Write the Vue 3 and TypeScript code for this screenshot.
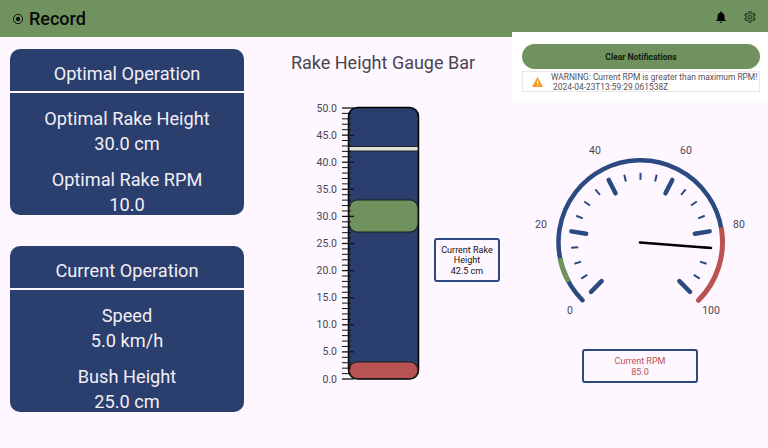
<script setup lang="ts">
const barTop = 108
const barBottom = 379
const barY = (v: number) => barBottom - ((barBottom - barTop) * v) / 50

const barTicks = Array.from({ length: 51 }, (_, v) => ({
  y: barY(v),
  major: v % 5 === 0,
}))
const barLabels = Array.from({ length: 11 }, (_, i) => ({
  y: barY(i * 5),
  text: (i * 5).toFixed(1),
}))

// gauge: 0 sits at 225deg, 100 at -45deg
const cx = 110.5
const cy = 107.3
const R = 82
const polar = (v: number, r: number) => {
  const a = ((225 - 2.7 * v) * Math.PI) / 180
  return { x: cx + r * Math.cos(a), y: cy - r * Math.sin(a) }
}
const arc = (from: number, to: number) => {
  const a = polar(from, R)
  const b = polar(to, R)
  const large = (to - from) * 2.7 > 180 ? 1 : 0
  return `M${a.x} ${a.y}A${R} ${R} 0 ${large} 1 ${b.x} ${b.y}`
}

const gaugeTicks = Array.from({ length: 21 }, (_, i) => {
  const v = i * 5
  const major = v % 20 === 0
  const p1 = polar(v, major ? 55 : 62.5)
  const p2 = polar(v, major ? 70 : 69.5)
  return { x1: p1.x, y1: p1.y, x2: p2.x, y2: p2.y, major }
})

const gaugeLabels = [
  { x: 40, y: 179, t: '0' },
  { x: 11, y: 93, t: '20' },
  { x: 65, y: 19, t: '40' },
  { x: 156, y: 19, t: '60' },
  { x: 209, y: 93, t: '80' },
  { x: 181, y: 179, t: '100' },
]
</script>

<template>
  <div class="page">
    <header class="topbar">
      <div class="record">
        <svg width="12" height="12" viewBox="0 0 12 12">
          <circle cx="6" cy="6" r="4.6" fill="none" stroke="#111" stroke-width="1" />
          <circle cx="6" cy="6" r="2.2" fill="#111" />
        </svg>
        <span>Record</span>
      </div>
      <div class="actions">
        <svg width="14" height="14" viewBox="0 0 24 24">
          <path fill="#000" d="M12 22c1.1 0 2-.9 2-2h-4c0 1.1.9 2 2 2zm6-6v-5c0-3.07-1.63-5.64-4.5-6.32V4c0-.83-.67-1.5-1.5-1.5s-1.5.67-1.5 1.5v.68C7.64 5.36 6 7.92 6 11v5l-2 2v1h16v-1l-2-2z" />
        </svg>
        <svg width="14" height="14" viewBox="0 0 24 24">
          <path fill="#2a3a24" d="M19.43 12.98c.04-.32.07-.64.07-.98s-.03-.66-.07-.98l2.11-1.65c.19-.15.24-.42.12-.64l-2-3.46c-.12-.22-.39-.3-.61-.22l-2.49 1c-.52-.4-1.08-.73-1.69-.98l-.38-2.65C14.46 2.18 14.25 2 14 2h-4c-.25 0-.46.18-.49.42l-.38 2.65c-.61.25-1.17.59-1.69.98l-2.49-1c-.23-.09-.49 0-.61.22l-2 3.46c-.13.22-.07.49.12.64l2.11 1.65c-.04.32-.07.65-.07.98s.03.66.07.98l-2.11 1.65c-.19.15-.24.42-.12.64l2 3.46c.12.22.39.3.61.22l2.49-1c.52.4 1.08.73 1.69.98l.38 2.65c.03.24.24.42.49.42h4c.25 0 .46-.18.49-.42l.38-2.65c.61-.25 1.17-.59 1.69-.98l2.49 1c.23.09.49 0 .61-.22l2-3.46c.12-.22.07-.49-.12-.64l-2.11-1.65zM17.5 12c0 .3-.03.6-.07.98l-.14 1.13.89.7 1.08.84-.7 1.21-1.27-.51-1.04-.42-.9.68c-.43.32-.84.56-1.25.73l-1.06.43-.16 1.13-.2 1.35h-1.4l-.19-1.35-.16-1.13-1.06-.43c-.43-.18-.83-.41-1.23-.71l-.91-.7-1.06.43-1.27.51-.7-1.21 1.08-.84.89-.7-.14-1.13c-.03-.31-.05-.65-.05-.95s.02-.64.07-.98l.14-1.13-.89-.7-1.08-.84.7-1.21 1.27.51 1.04.42.9-.68c.43-.32.84-.56 1.25-.73l1.06-.43.16-1.13.2-1.35h1.39l.19 1.35.16 1.13 1.06.43c.43.18.83.41 1.23.71l.91.7 1.06-.43 1.27-.51.7 1.21-1.07.85-.89.7.14 1.13c.03.31.05.63.05.95zM12 8c-2.21 0-4 1.79-4 4s1.79 4 4 4 4-1.79 4-4-1.79-4-4-4zm0 6c-1.1 0-2-.9-2-2s.9-2 2-2 2 .9 2 2-.9 2-2 2z" />
        </svg>
      </div>
    </header>

    <main class="content">
      <section class="cards">
        <div class="card">
          <div class="card-title">Optimal Operation</div>
          <div class="card-body">
            <div class="stat">Optimal Rake Height<br />30.0 cm</div>
            <div class="stat">Optimal Rake RPM<br />10.0</div>
          </div>
        </div>
        <div class="card">
          <div class="card-title">Current Operation</div>
          <div class="card-body">
            <div class="stat">Speed<br />5.0 km/h</div>
            <div class="stat">Bush Height<br />25.0 cm</div>
          </div>
        </div>
      </section>

      <section class="rake">
        <h2 class="rake-title">Rake Height Gauge Bar</h2>
        <div class="rake-row">
          <svg class="bar" width="110" height="290" viewBox="310 100 110 290">
            <rect x="348.5" y="107.5" width="70" height="271.5" rx="9" fill="#2a3f6d" stroke="#000" stroke-width="1.5" />
            <rect x="349" y="146.5" width="69" height="4.5" fill="#e0e0dc" stroke="#222" stroke-width="1" />
            <rect x="349" y="200" width="69" height="32" rx="8" fill="#6f925f" stroke="#1a1a1a" stroke-width="1.2" />
            <rect x="349" y="362" width="69" height="16.5" rx="8" fill="#b95353" stroke="#1a1a1a" stroke-width="1.2" />
            <line
              v-for="t in barTicks"
              :key="t.y"
              x1="342"
              :x2="t.major ? 354 : 351"
              :y1="t.y"
              :y2="t.y"
              stroke="#111"
              :stroke-width="t.major ? 1.3 : 1"
            />
            <text v-for="l in barLabels" :key="l.text" class="bar-label" x="337" :y="l.y + 3.5">{{ l.text }}</text>
          </svg>
          <div class="callout">Current Rake<br />Height<br />42.5 cm</div>
        </div>
      </section>

      <section class="rpm">
        <svg class="gauge" width="220" height="190" viewBox="0 0 220 190">
          <path :d="arc(0, 80)" fill="none" stroke="#2a4a80" stroke-width="4.5" stroke-linecap="round" />
          <path :d="arc(6, 12.5)" fill="none" stroke="#6f925f" stroke-width="5" />
          <path :d="arc(80, 100)" fill="none" stroke="#bb5252" stroke-width="5" stroke-linecap="round" />
          <line
            v-for="(t, i) in gaugeTicks"
            :key="i"
            :x1="t.x1"
            :y1="t.y1"
            :x2="t.x2"
            :y2="t.y2"
            stroke="#2a4a80"
            :stroke-width="t.major ? 4.5 : 2"
            :stroke-linecap="t.major ? 'round' : 'butt'"
          />
          <line x1="110" y1="107.5" x2="181" y2="113" stroke="#000" stroke-width="2.6" stroke-linecap="round" />
          <text v-for="l in gaugeLabels" :key="l.t" class="gauge-label" :x="l.x" :y="l.y">{{ l.t }}</text>
        </svg>
        <div class="rpm-box">Current RPM<br />85.0</div>
      </section>
    </main>

    <aside class="notifications">
      <button class="clear">Clear Notifications</button>
      <div class="notice">
        <svg class="warn" width="11" height="10" viewBox="0 0 24 22">
          <path fill="#f59a23" d="M0 22 12 0l12 22z" />
          <rect x="11" y="8" width="2.4" height="7" fill="#fff" />
          <rect x="11" y="16.5" width="2.4" height="2.4" fill="#fff" />
        </svg>
        <div class="notice-text">WARNING: Current RPM is greater than maximum RPM!<br />&nbsp;2024-04-23T13:59:29.061538Z</div>
      </div>
    </aside>
  </div>
</template>

<style scoped>
.page {
  position: relative;
  width: 768px;
  height: 448px;
  overflow: hidden;
  background: #fef7ff;
  font-family: Roboto, "Liberation Sans", sans-serif;
}

.topbar {
  height: 37px;
  background: #6f925f;
  display: flex;
  align-items: center;
  justify-content: space-between;
  padding: 0 11px 0 12px;
  box-sizing: border-box;
}

.record {
  display: flex;
  align-items: center;
  gap: 5px;
  font-size: 18px;
  font-weight: 500;
  color: #0a0a0a;
}

.actions {
  display: flex;
  gap: 15px;
  align-items: center;
  margin-top: -3px;
}

.actions svg {
  display: block;
}

.content {
  display: flex;
  height: 411px;
}

.cards {
  width: 234px;
  margin: 0 10px;
  padding-top: 12px;
  display: flex;
  flex-direction: column;
  gap: 31px;
  flex-shrink: 0;
}

.card {
  height: 166px;
  overflow: hidden;
  background: #2a3f6d;
  border-radius: 10px;
  color: #f2eef6;
  text-align: center;
  font-size: 18.2px;
  line-height: 24.5px;
}

.card-title {
  height: 42px;
  line-height: 50px;
  border-bottom: 2.5px solid #fef7ff;
}

.card-body {
  padding-top: 14px;
  display: flex;
  flex-direction: column;
  gap: 12px;
}

.rake {
  width: 258px;
  flex-shrink: 0;
}

.rake-title {
  margin: 15px 0 0;
  font-size: 18px;
  font-weight: 400;
  line-height: 22px;
  color: #49454f;
  text-align: center;
}

.rake-row {
  display: flex;
  align-items: flex-start;
  margin-top: 26px;
  margin-left: 56px;
}

.bar {
  display: block;
  flex-shrink: 0;
}

.bar-label {
  font-size: 10.5px;
  fill: #49454f;
  text-anchor: end;
}

.callout {
  width: 66px;
  height: 44px;
  box-sizing: border-box;
  margin-top: 138px;
  margin-left: 14px;
  flex-shrink: 0;
  border: 2.5px solid #2a4a80;
  border-radius: 3px;
  font-size: 9px;
  line-height: 10.5px;
  color: #111;
  text-align: center;
  padding-top: 4.5px;
}

.rpm {
  display: flex;
  flex-direction: column;
  align-items: flex-start;
  margin-left: 18px;
  padding-top: 98px;
}

.gauge {
  display: block;
  flex-shrink: 0;
}

.gauge-label {
  font-size: 10.5px;
  fill: #49454f;
  text-anchor: middle;
}

.rpm-box {
  width: 116px;
  height: 34px;
  box-sizing: border-box;
  margin-top: 24px;
  margin-left: 52px;
  border: 2.5px solid #2a4a80;
  border-radius: 3px;
  font-size: 9px;
  line-height: 11px;
  color: #bb5252;
  text-align: center;
  padding-top: 4.5px;
}

.notifications {
  position: absolute;
  top: 32px;
  left: 512px;
  width: 256px;
  height: 69px;
  box-sizing: border-box;
  background: #fff;
  padding: 12px 8px 0 10px;
}

.clear {
  display: block;
  width: 238px;
  height: 25px;
  border: none;
  border-radius: 13px;
  background: #6f925f;
  color: #141a10;
  font-family: inherit;
  font-size: 8.5px;
  font-weight: 700;
  padding: 0;
}

.notice {
  display: flex;
  align-items: center;
  height: 21px;
  margin-top: 2px;
  width: 238px;
  box-sizing: border-box;
  border: 1px solid #e8e8e8;
  padding-left: 9px;
}

.warn {
  flex-shrink: 0;
}

.notice-text {
  margin-left: 8px;
  font-size: 8.4px;
  line-height: 10px;
  white-space: nowrap;
  color: #55525a;
}
</style>

<style>
html,
body {
  background: #fef7ff;
}
</style>
